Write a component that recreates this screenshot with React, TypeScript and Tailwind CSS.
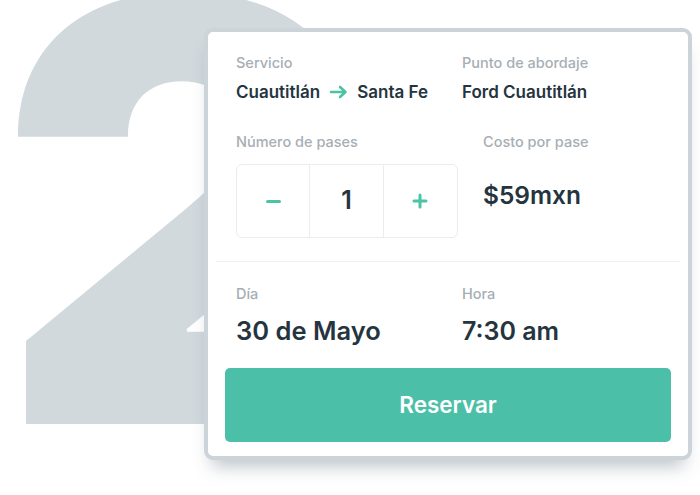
import React, { useState } from "react";

const font = { fontFamily: "Inter, 'Noto Sans', sans-serif" };

const Label: React.FC<{ children: React.ReactNode; className?: string }> = ({ children, className }) => (
  <div className={`text-[14.5px] leading-4 font-medium text-[#a7aeb4] ${className ?? ""}`}>{children}</div>
);

const App: React.FC = () => {
  const [passes, setPasses] = useState<number>(1);

  return (
    <div className="relative w-[700px] h-[495px] bg-white overflow-hidden" style={font}>
      {/* big step number in the background */}
      <div className="absolute left-[-2px] top-[-82px] text-[586px] leading-none font-black text-[#d1d9dd] select-none tracking-tight">
        2
      </div>

      <div className="relative pl-[204px] pt-[28px]">
        <div className="w-[488px] h-[432px] bg-white border-4 border-[#ccd4da] rounded-[9px] shadow-[0_14px_18px_-8px_rgba(60,80,95,0.35)] flex flex-col">
          {/* servicio / punto de abordaje */}
          <div className="flex pl-[28px] pt-[23px]">
            <div className="w-[226px]">
              <Label>Servicio</Label>
              <div className="mt-[11px] flex items-center gap-[9px] text-[17px] leading-5 font-semibold text-[#253540]">
                <span>Cuautitlán</span>
                <svg width="19" height="14" viewBox="0 0 19 14" fill="none" stroke="#4cc3a4" strokeWidth="2.6" strokeLinecap="round" strokeLinejoin="round">
                  <path d="M2 7h14.5M11 2l5.5 5-5.5 5" />
                </svg>
                <span>Santa Fe</span>
              </div>
            </div>
            <div>
              <Label>Punto de abordaje</Label>
              <div className="mt-[11px] text-[17px] leading-5 font-semibold text-[#253540]">Ford Cuautitlán</div>
            </div>
          </div>

          {/* pases / costo */}
          <div className="flex pl-[28px] pt-[32px]">
            <div className="w-[247px]">
              <Label>Número de pases</Label>
              <div className="mt-[14px] w-[222px] h-[74px] flex border border-[#e9edef] rounded-[6px]">
                <button
                  className="w-[74px] flex items-center justify-center border-r border-[#e9edef]"
                  onClick={() => setPasses(Math.max(1, passes - 1))}
                >
                  <span className="block w-[15px] h-[3px] rounded-full bg-[#4cc3a4]" />
                </button>
                <div className="w-[74px] flex items-center justify-center text-[25px] font-semibold text-[#253540] border-r border-[#e9edef]">
                  {passes}
                </div>
                <button className="w-[74px] flex items-center justify-center" onClick={() => setPasses(passes + 1)}>
                  <svg width="16" height="16" viewBox="0 0 16 16" stroke="#4cc3a4" strokeWidth="3" strokeLinecap="round">
                    <path d="M8 2v12M2 8h12" />
                  </svg>
                </button>
              </div>
            </div>
            <div>
              <Label>Costo por pase</Label>
              <div className="mt-[31px] text-[24.5px] leading-7 font-semibold text-[#253540]">$59mxn</div>
            </div>
          </div>

          <div className="mx-[8px] mt-[23px] h-px bg-[#eef1f3]" />

          {/* día / hora */}
          <div className="flex pl-[28px] pt-[24px]">
            <div className="w-[226px]">
              <Label>Día</Label>
              <div className="mt-[15px] text-[25.5px] leading-7 font-semibold text-[#253540]">30 de Mayo</div>
            </div>
            <div>
              <Label>Hora</Label>
              <div className="mt-[15px] text-[25px] leading-7 font-semibold text-[#253540]">7:30 am</div>
            </div>
          </div>

          <button className="mx-[17px] mt-[23px] h-[74px] rounded-[5px] bg-[#4bbfa7] text-white text-[22.5px] font-semibold">
            Reservar
          </button>
        </div>
      </div>
    </div>
  );
};

export default App;
